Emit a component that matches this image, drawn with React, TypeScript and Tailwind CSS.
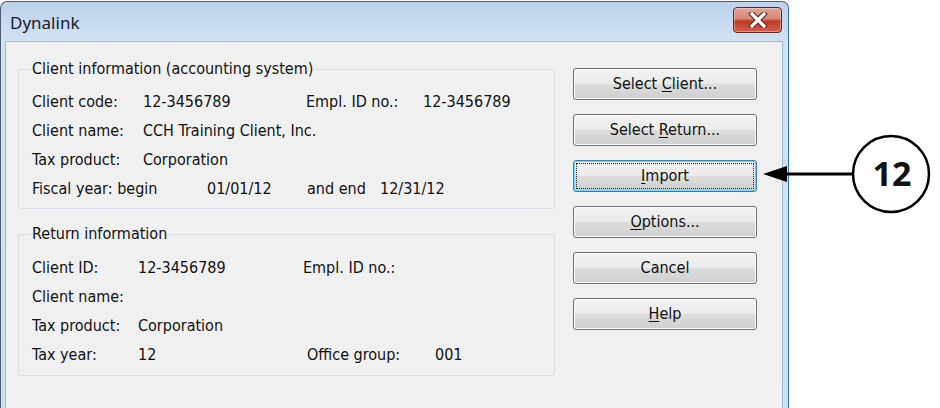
import React from 'react';

const ui = { fontFamily: '"Liberation Sans Narrow", "DejaVu Sans Condensed", "Liberation Sans", sans-serif' };

function U({ c }: { c: string }) {
  return <span className="underline underline-offset-[2px] decoration-[1px]">{c}</span>;
}

function Btn({ children, focused }: { children: React.ReactNode; focused?: boolean }) {
  return (
    <div
      className={
        'h-[32px] rounded-[3px] border flex items-center justify-center p-[2px] bg-[linear-gradient(#f2f2f2_0%,#ebebeb_50%,#dddddd_50%,#cfcfcf_100%)] ' +
        (focused ? 'border-[#3c7fb1] shadow-[inset_0_0_0_1px_#6fd2f6]' : 'border-[#707070] shadow-[inset_0_0_0_1px_#fbfbfb]')
      }
    >
      <div
        className={
          'w-full h-full flex items-center justify-center text-[16px] text-[#111] ' +
          (focused ? 'border border-dotted border-[#222]' : '')
        }
      >
        <span className="whitespace-pre">{children}</span>
      </div>
    </div>
  );
}

function Row({ children }: { children: React.ReactNode }) {
  return <div className="h-[29px] flex items-center whitespace-nowrap">{children}</div>;
}

export default function App() {
  return (
    <div className="relative w-[940px] h-[408px] bg-white overflow-hidden" style={ui}>
      <div className="w-[789px] h-[407px] mt-[1px] rounded-t-[7px] border border-b-0 border-[#4d5d70] border-r-[#2f6fa5] bg-[linear-gradient(#bcd2eb,#d2e2f4_40px,#cddff2)] flex flex-col">
        {/* title bar */}
        <div className="h-[39px] flex items-center justify-between pl-[9px] pr-[6px]">
          <span className="text-[17px] text-[#1a1a2a] pt-[3px]" style={{ fontFamily: '"Noto Sans", sans-serif' }}>
            Dynalink
          </span>
          <div className="w-[49px] h-[26px] mt-[-4px] rounded-[4px] border border-[#5a2620] bg-[linear-gradient(#e7a597_0%,#d98574_45%,#c03a25_55%,#d0614b_100%)] flex items-center justify-center shadow-[inset_0_0_0_1px_rgba(255,255,255,0.35)]">
            <svg width="20" height="16" viewBox="0 0 20 16">
              <path d="M4 2 L16 14 M16 2 L4 14" stroke="#5a3030" strokeWidth="5.5" strokeLinecap="square" />
              <path d="M4 2 L16 14 M16 2 L4 14" stroke="#ffffff" strokeWidth="3.2" strokeLinecap="square" />
            </svg>
          </div>
        </div>

        {/* client area */}
        <div className="flex-1 ml-[4px] mr-[5px] bg-[#f0f0f0] border border-b-0 border-[#a3b8cf] flex pl-[12px] text-[16px] text-[#111]">
          <div className="w-[537px] flex flex-col">
            <fieldset className="mt-[18px] border border-[#d5dbe1] rounded-[3px] pl-[13px] pb-[5px]">
              <legend className="-ml-[2px] px-[2px] leading-[18px]">Client information (accounting system)</legend>
              <div className="pt-[9px]">
                <Row>
                  <span className="w-[111px]">Client code:</span>
                  <span className="w-[163px]">12-3456789</span>
                  <span className="w-[117px]">Empl. ID no.:</span>
                  <span>12-3456789</span>
                </Row>
                <Row>
                  <span className="w-[111px]">Client name:</span>
                  <span>CCH Training Client, Inc.</span>
                </Row>
                <Row>
                  <span className="w-[111px]">Tax product:</span>
                  <span>Corporation</span>
                </Row>
                <Row>
                  <span className="w-[175px]">Fiscal year: begin</span>
                  <span className="w-[100px]">01/01/12</span>
                  <span className="w-[73px]">and end</span>
                  <span>12/31/12</span>
                </Row>
              </div>
            </fieldset>

            <fieldset className="mt-[16px] border border-[#d5dbe1] rounded-[3px] pl-[13px] pb-[6px]">
              <legend className="-ml-[2px] px-[2px] leading-[18px]">Return information</legend>
              <div className="pt-[10px]">
                <Row>
                  <span className="w-[106px]">Client ID:</span>
                  <span className="w-[165px]">12-3456789</span>
                  <span>Empl. ID no.:</span>
                </Row>
                <Row>
                  <span>Client name:</span>
                </Row>
                <Row>
                  <span className="w-[106px]">Tax product:</span>
                  <span>Corporation</span>
                </Row>
                <Row>
                  <span className="w-[106px]">Tax year:</span>
                  <span className="w-[169px]">12</span>
                  <span className="w-[128px]">Office group:</span>
                  <span>001</span>
                </Row>
              </div>
            </fieldset>
          </div>

          <div className="ml-[18px] w-[184px] pt-[26px] flex flex-col gap-[14px]">
            <Btn>{'Select '}<U c="C" />lient...</Btn>
            <Btn>{'Select '}<U c="R" />eturn...</Btn>
            <Btn focused><U c="I" />mport</Btn>
            <Btn><U c="O" />ptions...</Btn>
            <Btn>Cancel</Btn>
            <Btn><U c="H" />elp</Btn>
          </div>
        </div>
      </div>

      {/* callout */}
      <svg className="absolute left-[750px] top-[120px]" width="190" height="110" viewBox="750 120 190 110">
        <line x1="782" y1="174" x2="853" y2="174" stroke="#000" strokeWidth="3" />
        <polygon points="763,174 787,166 787,182" fill="#000" />
        <circle cx="891" cy="174" r="38" fill="#fff" stroke="#000" strokeWidth="2.5" />
        <text
          x="892"
          y="186"
          textAnchor="middle"
          fontSize="34"
          fontWeight="700"
          fill="#111"
          style={{ fontFamily: '"Open Sans", sans-serif' }}
        >
          12
        </text>
      </svg>
    </div>
  );
}
